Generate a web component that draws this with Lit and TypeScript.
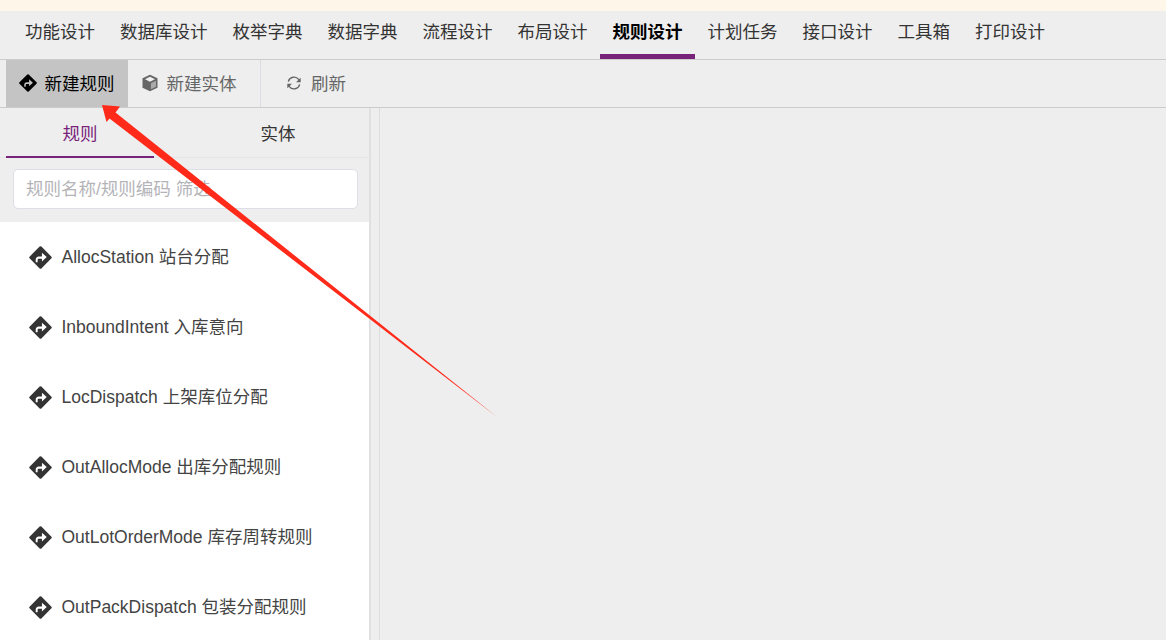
import { LitElement, html, css, svg } from "lit";
import { customElement } from "lit/decorators.js";

const turn = svg`<path fill-rule="evenodd" d="M12.9.6a1.300 1.300 0 0 0-1.800 0L.6 11.100a1.300 1.300 0 0 0 0 1.800l10.500 10.500a1.300 1.300 0 0 0 1.800 0l10.500-10.500a1.300 1.300 0 0 0 0-1.800zM13.500 7l5 4.600-5 4.600v-3h-3.200c-.8 0-1.300.6-1.300 1.300V17H7v-2.900c0-1.800 1.400-3.200 3.200-3.200h3.300z"/>`;

@customElement("app-root")
export class AppRoot extends LitElement {
  static styles = css`
    :host { display: block; position: relative; width: 1166px; height: 640px; overflow: hidden; background: #eee;
      font-family: "Liberation Sans", "Noto Sans CJK SC", sans-serif; font-size: 17.5px; color: #333; }
    .notice { height: 11px; background: #fff6ea; }
    .nav { display: flex; height: 48px; padding-left: 12.5px; border-bottom: 1px solid #ccc; box-sizing: content-box; }
    .nav a { padding: 0 12.5px; line-height: 42px; height: 48px; box-sizing: border-box; white-space: nowrap; }
    .nav a.on { font-weight: 700; color: #000; border-bottom: 5px solid #79227a; }
    .bar { display: flex; height: 47px; padding-left: 6px; border-bottom: 1px solid #ccc; color: #666; }
    .btn { display: flex; align-items: center; gap: 7.5px; padding: 0 13px 2px; white-space: nowrap; box-sizing: border-box; }
    .btn svg { flex: none; margin-top: 1px; }
    .btn.on { background: #c4c4c4; color: #000; width: 122px; gap: 7.5px; }
    .btn.ent { width: 133px; border-right: 1px solid #dcdde3; }
    .btn.ref { padding-left: 25px; gap: 9px; }
    .main { display: flex; height: 532px; }
    .left { width: 369px; flex: none; display: flex; flex-direction: column; }
    .tabs { display: flex; height: 50px; box-sizing: border-box; padding-left: 6px; border-bottom: 1px solid #e6e6e6; }
    .tabs span { width: 148px; text-align: center; line-height: 52px; height: 50px; box-sizing: border-box; }
    .tabs span.on { color: #79227a; border-bottom: 2px solid #79227a; }
    .tabs span + span { width: 215px; padding-left: 33px; }
    .search { padding: 11px 11px 13px 13px; height: 64px; box-sizing: border-box; }
    input { display: block; width: 100%; height: 40px; box-sizing: border-box; border: 1px solid #dcdfe6; border-radius: 5px;
      padding: 0 12px; font: inherit; background: #fff; outline: none; }
    input::placeholder { color: #b4b4b8; opacity: 1; }
    .list { flex: 1; background: #fff; overflow: hidden; }
    .row { display: flex; align-items: center; height: 70px; box-sizing: border-box; padding: 0 0 0 29px; gap: 9.5px; color: #444; white-space: nowrap; }
    .row span { position: relative; top: -2px; }
    .row svg { fill: #333; flex: none; }
    .track { width: 11px; flex: none; box-sizing: border-box; border-left: 2px solid #e0e0e0; border-right: 1px solid #ddd; }
    .arrow { position: absolute; left: 0; top: 0; pointer-events: none; }
  `;

  render() {
    const tabs = ["功能设计","数据库设计","枚举字典","数据字典","流程设计","布局设计","规则设计","计划任务","接口设计","工具箱","打印设计"];
    const rows = ["AllocStation 站台分配","InboundIntent 入库意向","LocDispatch 上架库位分配","OutAllocMode 出库分配规则","OutLotOrderMode 库存周转规则","OutPackDispatch 包装分配规则"];
    return html`
      <div class="notice"></div>
      <nav class="nav">${tabs.map(t => html`<a class=${t === "规则设计" ? "on" : ""}>${t}</a>`)}</nav>
      <div class="bar">
        <div class="btn on"><svg width="18" height="18" viewBox="0 0 24 24" fill="#000">${turn}</svg>新建规则</div>
        <div class="btn ent"><svg width="18" height="18" viewBox="0 0 24 24" fill="#666"><path d="M12 1 2 5.800v12.400L12 23l10-4.800V5.800z"/><path fill="#f2f2f2" d="M12 3.600 18.600 7 12 10.300 5.400 7z"/><path fill="#aaa" d="M13.200 12.300 20 9v7.900l-6.800 3.300z"/></svg>新建实体</div>
        <div class="btn ref"><svg width="16" height="16" viewBox="0 0 24 24" fill="none" stroke="#666" stroke-width="2"><path d="M3.500 10a8.800 8.800 0 0 1 15.500-3.500l2 2.500M20.500 14a8.800 8.800 0 0 1-15.500 3.500l-2-2.500"/><path fill="#666" stroke="none" d="M22 4v7h-7zM2 20v-7h7z"/></svg>刷新</div>
      </div>
      <div class="main">
        <div class="left">
          <div class="tabs"><span class="on">规则</span><span>实体</span></div>
          <div class="search"><input placeholder="规则名称/规则编码 筛选" /></div>
          <div class="list">${rows.map(r => html`<div class="row"><svg width="23" height="23" viewBox="0 0 24 24">${turn}</svg><span>${r}</span></div>`)}</div>
        </div>
        <div class="track"></div>
      </div>
      <svg class="arrow" width="1166" height="640"><path fill="#ff2a1a" d="M102 105 120 106.500 115.500 112.500 497 417 109.500 118.500 106.500 122z"/></svg>
    `;
  }
}
